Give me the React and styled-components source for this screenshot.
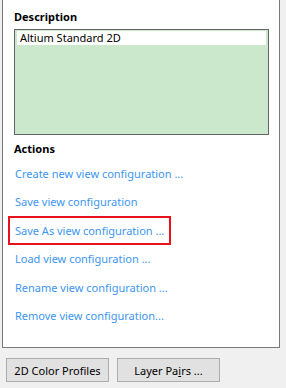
import styled, { createGlobalStyle } from 'styled-components';

const GlobalStyle = createGlobalStyle`
  html, body {
    margin: 0;
    padding: 0;
    background: #f0f0f0;
    overflow: hidden;
  }
  body {
    width: 286px;
    height: 388px;
    font-family: "Noto Sans", "Open Sans", sans-serif;
    font-size: 11px;
  }
`;

const Page = styled.div`
  display: flex;
  flex-direction: column;
  width: 286px;
  height: 388px;
`;

const Panel = styled.div`
  margin: -20px 6px 0 2px;
  border: 1px solid #7a7a7a;
  background: #fff;
  padding: 0 10px 0 11px;
  height: 368px;
  box-sizing: border-box;
  display: flex;
  flex-direction: column;
`;

const Heading = styled.div`
  font-weight: 700;
  color: #000;
  line-height: 16px;
  margin-top: ${p => p.$top}px;
`;

const DescBox = styled.div`
  margin-top: 4px;
  height: 106px;
  box-sizing: border-box;
  border: 1px solid #646464;
  background: #cce8cc;
  padding: 1px 2px;
`;

const SelectedLine = styled.div`
  background: #fff;
  height: 14px;
  line-height: 14px;
  padding-left: 3px;
  color: #000;
`;

const Actions = styled.div`
  display: flex;
  flex-direction: column;
  margin-top: ${p => p.$top}px;
  margin-left: -6px;
`;

const ActionRow = styled.div`
  height: 28.4px;
  box-sizing: border-box;
  display: flex;
  align-items: center;
  align-self: flex-start;
  padding: 0 5px 0 ${p => (p.$active ? 5 : 7)}px;
  border: ${p => (p.$active ? '2px solid #e8111e' : 'none')};
  color: #3d95f0;
  white-space: nowrap;
  cursor: pointer;
`;

const Buttons = styled.div`
  display: flex;
  gap: 8px;
  padding: 10px 0 0 6px;
`;

const Button = styled.button`
  width: 103px;
  height: 24px;
  background: #e1e1e1;
  border: 1px solid #adadad;
  border-radius: 0;
  font-family: inherit;
  font-size: 11px;
  color: #000;
  padding: 0;
`;

const links = [
  'Create new view configuration ...',
  'Save view configuration',
  'Save As view configuration ...',
  'Load view configuration ...',
  'Rename view configuration ...',
  'Remove view configuration...',
];

export default function App() {
  return (
    <Page>
      <GlobalStyle />
      <Panel>
        <Actions $top={-3}>
          <ActionRow>Apply view configuration</ActionRow>
        </Actions>
        <Heading $top={3}>Description</Heading>
        <DescBox>
          <SelectedLine>Altium Standard 2D</SelectedLine>
        </DescBox>
        <Heading $top={6}>Actions</Heading>
        <Actions $top={2}>
          {links.map((l, i) => (
            <ActionRow key={l} $active={i === 2}>
              {l}
            </ActionRow>
          ))}
        </Actions>
      </Panel>
      <Buttons>
        <Button>2D Color Profiles</Button>
        <Button>
          Layer Pa<u>i</u>rs ...
        </Button>
      </Buttons>
    </Page>
  );
}
